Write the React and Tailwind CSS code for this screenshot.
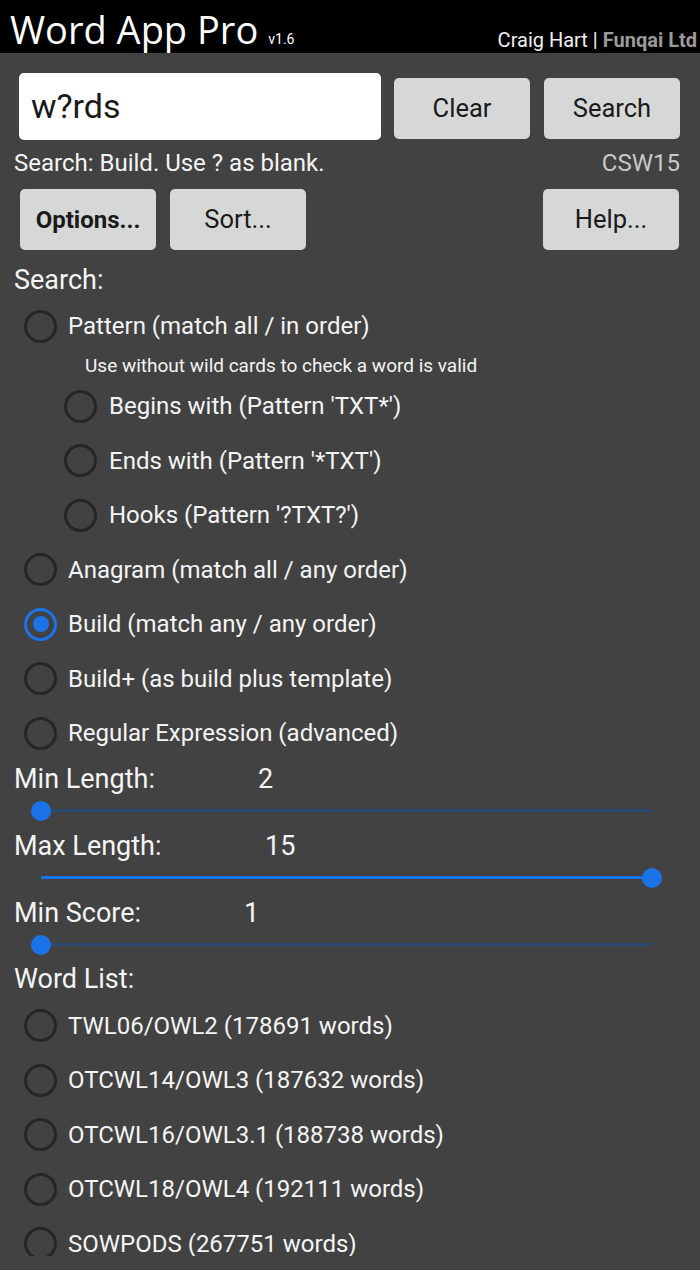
import React from "react";

const Radio = ({ checked }) => (
  <span
    className={
      "flex h-[33px] w-[33px] shrink-0 items-center justify-center rounded-full border-[3px] " +
      (checked ? "border-[#1a73e8]" : "border-[#262626]")
    }
  >
    {checked && <span className="h-[16px] w-[16px] rounded-full bg-[#1a73e8]" />}
  </span>
);

const RadioRow = ({ label, checked, indent }) => (
  <div className={"flex h-[54.5px] items-center " + (indent ? "pl-[50px]" : "pl-[10px]")}>
    <Radio checked={checked} />
    <span className={"text-[24px] text-[#f4f4f4] " + (indent ? "ml-[12px]" : "ml-[11px]")}>{label}</span>
  </div>
);

const Btn = ({ children, bold, className = "" }) => (
  <div
    className={
      "flex h-[61px] w-[136px] items-center justify-center rounded-[5px] bg-[#d6d7d7] text-[#1a1a1a] " +
      (bold ? "font-bold text-[24px] " : "text-[25.5px] ") +
      className
    }
  >
    {children}
  </div>
);

const Slider = ({ pct, full }) => (
  <div className="relative h-[30px]">
    <div
      className={
        "absolute left-[27px] top-[13.5px] h-[3px] w-[611px] " +
        (full ? "bg-[#1a73e8]" : "bg-[#2d4b70]")
      }
    />
    <div
      className="absolute top-[5px] h-[20px] w-[20px] rounded-full bg-[#1a73e8]"
      style={{ left: 27 + (611 * pct) / 100 - 10 }}
    />
  </div>
);

const LabelRow = ({ label, value, w }) => (
  <div className="flex h-[32px] items-center text-[27px] text-[#f4f4f4]">
    <span className={w}>{label}</span>
    <span>{value}</span>
  </div>
);

export default function App() {
  return (
    <div className="w-[700px] overflow-hidden" style={{ fontFamily: "Roboto, 'Liberation Sans', sans-serif" }}>
      <div className="flex h-[53px] items-end justify-between bg-black pl-[10px] pr-[3px]">
        <div className="flex items-baseline pb-[5px]">
          <span className="text-[38px] leading-none text-white" style={{ fontFamily: "'Open Sans', sans-serif" }}>
            Word App Pro
          </span>
          <span className="ml-[10px] text-[14px] leading-none text-white">v1.6</span>
        </div>
        <div className="pb-[3px] text-[20px] leading-none text-[#f0f0f0]">
          Craig Hart | <span className="font-bold text-[#9a9a9a]">Funqai Ltd</span>
        </div>
      </div>

      <div className="h-[1203px] overflow-hidden bg-[#424242] px-[14px]">
        <div className="flex pt-[20px] pl-[5px]">
          <div className="flex h-[67px] w-[362px] items-center rounded-[5px] bg-white pl-[12px] text-[34px] text-[#1a1a1a]">
            w?rds
          </div>
          <Btn className="ml-[13px] mt-[5px]">Clear</Btn>
          <Btn className="ml-[14px] mt-[5px]">Search</Btn>
        </div>

        <div className="mt-[8px] flex h-[30px] items-center justify-between pr-[6px] text-[24px]">
          <span className="text-[#f4f4f4]">Search: Build. Use ? as blank.</span>
          <span className="text-[#c8c8c8]">CSW15</span>
        </div>

        <div className="mt-[11px] flex pl-[6px]">
          <Btn bold>Options...</Btn>
          <Btn className="ml-[14px]">Sort...</Btn>
          <div className="flex-1" />
          <Btn className="mr-[7px]">Help...</Btn>
        </div>

        <div className="mt-[14px] flex h-[32px] items-center text-[27px] text-[#f4f4f4]">Search:</div>

        <div className="mt-[3px]">
          <RadioRow label="Pattern (match all / in order)" />
          <div className="-mt-[0.5px] flex h-[26px] items-center pl-[71px] text-[19px] text-[#f4f4f4]">
            Use without wild cards to check a word is valid
          </div>
          <RadioRow indent label="Begins with (Pattern 'TXT*')" />
          <RadioRow indent label="Ends with (Pattern '*TXT')" />
          <RadioRow indent label="Hooks (Pattern '?TXT?')" />
          <RadioRow label="Anagram (match all / any order)" />
          <RadioRow checked label="Build (match any / any order)" />
          <RadioRow label="Build+ (as build plus template)" />
          <RadioRow label="Regular Expression (advanced)" />
        </div>

        <div className="mt-[3px]">
          <LabelRow label="Min Length:" value="2" w="w-[244px]" />
          <Slider pct={0} />
          <div className="mt-[5px]">
            <LabelRow label="Max Length:" value="15" w="w-[251px]" />
          </div>
          <Slider pct={100} full />
          <div className="mt-[5px]">
            <LabelRow label="Min Score:" value="1" w="w-[230px]" />
          </div>
          <Slider pct={0} />
        </div>

        <div className="mt-[4px] flex h-[32px] items-center text-[27px] text-[#f4f4f4]">Word List:</div>

        <div className="mt-[3px]">
          <RadioRow label="TWL06/OWL2 (178691 words)" />
          <RadioRow label="OTCWL14/OWL3 (187632 words)" />
          <RadioRow label="OTCWL16/OWL3.1 (188738 words)" />
          <RadioRow label="OTCWL18/OWL4 (192111 words)" />
          <RadioRow label="SOWPODS (267751 words)" />
        </div>
      </div>
      <div className="h-[14px] bg-[#424242]" />
    </div>
  );
}
